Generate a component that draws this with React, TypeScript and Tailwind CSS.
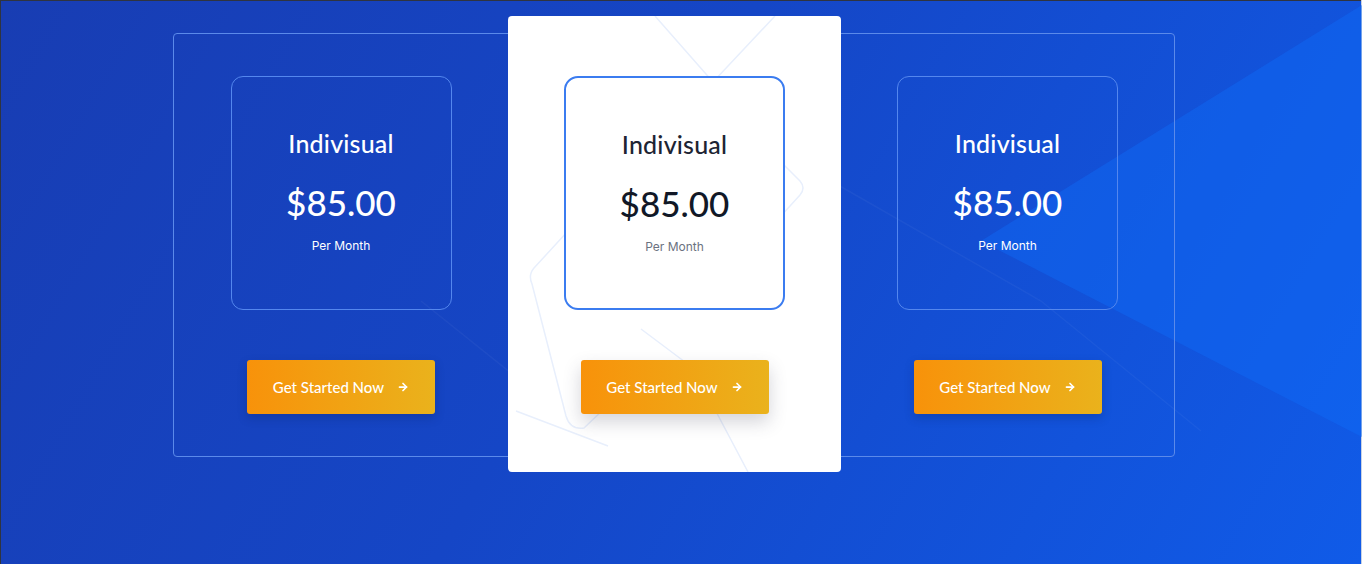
import { ArrowRight } from "lucide-react"

const PlanBox = ({ featured }: { featured?: boolean }) => {
  return (
    <div
      className={
        featured
          ? "w-[221px] h-[234px] rounded-[14px] border-2 border-[#3b7cf0] bg-white flex flex-col items-center pt-[51px]"
          : "w-[221px] h-[234px] rounded-[12px] border-[1.5px] border-[#5487ee] flex flex-col items-center pt-[51px]"
      }
    >
      <div
        className={
          "text-[25px] leading-[30px] font-medium tracking-[0.2px] " +
          (featured ? "text-[#1d2433]" : "text-white")
        }
        style={{ fontFamily: "Lato, 'Open Sans', sans-serif" }}
      >
        Indivisual
      </div>
      <div
        className={"mt-[24px] text-[35px] leading-[40px] font-medium " + (featured ? "text-[#111827]" : "text-white")}
        style={{ fontFamily: "Lato, 'Open Sans', sans-serif" }}
      >
        $85.00
      </div>
      <div
        className={"mt-[16px] text-[12px] leading-[16px] " + (featured ? "text-[#6b7280]" : "text-white")}
        style={{ fontFamily: "Inter, 'Noto Sans', sans-serif" }}
      >
        Per Month
      </div>
    </div>
  )
}

const StartButton = ({ shadow }: { shadow?: boolean }) => {
  return (
    <button
      className={
        "mt-[50px] w-[188px] h-[54px] rounded-[3px] flex items-center justify-center gap-[13px] text-white text-[15px] font-medium bg-[linear-gradient(90deg,#f8920a,#eab21c)] " +
        (shadow ? "shadow-[0_8px_18px_rgba(60,60,80,0.22)]" : "shadow-[0_4px_10px_rgba(10,30,90,0.25)]")
      }
      style={{ fontFamily: "Lato, 'Open Sans', sans-serif" }}
    >
      <span>Get Started Now</span>
      <ArrowRight size={12} strokeWidth={3.5} />
    </button>
  )
}

const App = () => {
  return (
    <div className="w-[1365px] h-[564px] flex overflow-hidden">
      <div className="relative flex-1 h-full border-l border-t border-[#2f3440] bg-[linear-gradient(120deg,#183db3_0%,#1546c6_45%,#105be8_100%)]">
        {/* background shapes */}
        <svg className="absolute inset-0 pointer-events-none" width="1361" height="564" viewBox="0 0 1361 564">
          <polygon points="1361,4 980,240 1361,436" fill="#0f6af6" opacity="0.45" />
          <g stroke="#ffffff" strokeOpacity="0.04" strokeWidth="1.5" fill="none">
            <path d="M420 300 L520 380" />
            <path d="M830 180 L1040 300 L1200 430" />
          </g>
        </svg>

        <div className="relative ml-[172px] mt-[32px] w-[1002px] h-[424px] border-[1.5px] border-[#5b8aea] rounded-[4px] grid grid-cols-[334px_333px_333px]">
          <div className="flex flex-col items-center pt-[42px]">
            <PlanBox />
            <StartButton />
          </div>

          <div className="relative -mt-[18px] h-[456px] bg-white rounded-[4px] flex flex-col items-center pt-[60px] overflow-hidden">
            <svg className="absolute inset-0 pointer-events-none" width="333" height="456" viewBox="0 0 333 456">
              <g stroke="#e8effc" strokeWidth="1.5" fill="none" strokeLinejoin="round">
                <path d="M147 0 L205 66 L267 0" />
                <path d="M262 135 L292 165 Q298 172 292 179 L262 212" />
                <path d="M60 215 L26 252 Q20 259 24 268 L58 400 Q62 414 76 412 L120 370" />
                <path d="M8 395 L100 430" />
                <path d="M180 198 L136 275" />
                <path d="M133 313 L185 352 L240 456" />
              </g>
            </svg>
            <div className="relative flex flex-col items-center">
              <PlanBox featured />
              <StartButton shadow />
            </div>
          </div>

          <div className="flex flex-col items-center pt-[42px]">
            <PlanBox />
            <StartButton />
          </div>
        </div>
      </div>
      <div className="w-[4px] h-full border-l border-[#c9d2e2] bg-white" />
    </div>
  )
}

export default App
